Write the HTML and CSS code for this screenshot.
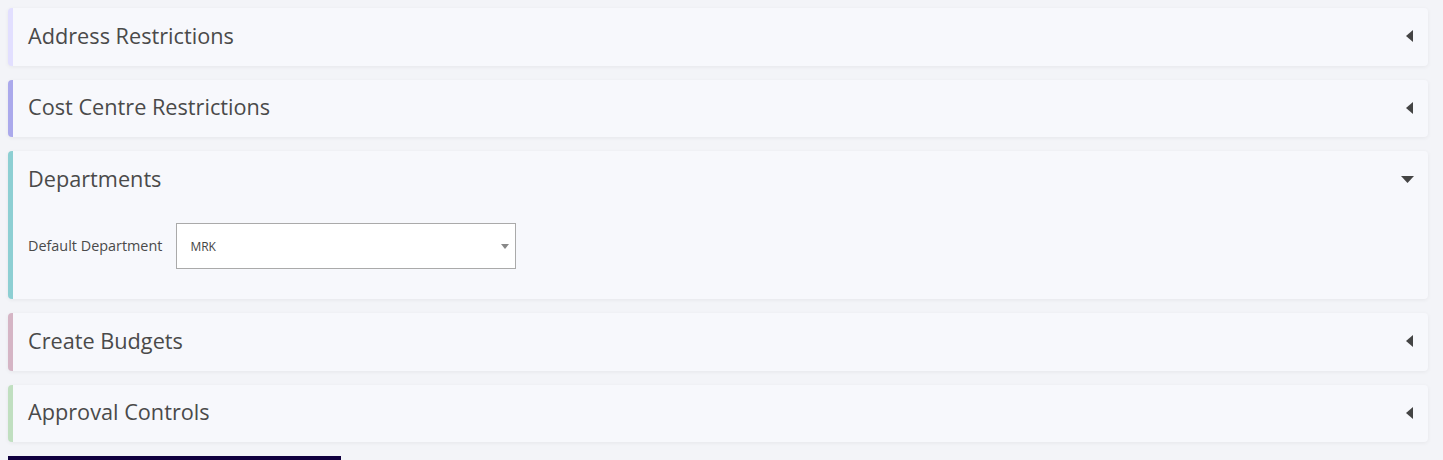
FILE: index.html
```html
<!DOCTYPE html>
<html>
<head>
<meta charset="utf-8">
<link rel="stylesheet" href="styles.css">
</head>
<body>
<div class="stack">
  <section class="panel c1">
    <div class="panel-head"><h2>Address Restrictions</h2>
      <svg class="caret" width="7" height="12" viewBox="0 0 7 12"><path d="M7 0V12L0 6Z" fill="#444"/></svg></div>
  </section>
  <section class="panel c2">
    <div class="panel-head"><h2>Cost Centre Restrictions</h2>
      <svg class="caret" width="7" height="12" viewBox="0 0 7 12"><path d="M7 0V12L0 6Z" fill="#444"/></svg></div>
  </section>
  <section class="panel c3">
    <div class="panel-head"><h2>Departments</h2>
      <svg class="caret down" width="13" height="7" viewBox="0 0 13 7"><path d="M0 0H13L6.5 7Z" fill="#444"/></svg></div>
    <div class="panel-body">
      <label class="field-label">Default Department</label>
      <div class="select">
        <span>MRK</span>
        <svg width="8" height="5" viewBox="0 0 8 5"><path d="M0 0H8L4 5Z" fill="#888"/></svg>
      </div>
    </div>
  </section>
  <section class="panel c4">
    <div class="panel-head"><h2>Create Budgets</h2>
      <svg class="caret" width="7" height="12" viewBox="0 0 7 12"><path d="M7 0V12L0 6Z" fill="#444"/></svg></div>
  </section>
  <section class="panel c5">
    <div class="panel-head"><h2>Approval Controls</h2>
      <svg class="caret" width="7" height="12" viewBox="0 0 7 12"><path d="M7 0V12L0 6Z" fill="#444"/></svg></div>
  </section>
  <div class="footer-bar"></div>
</div>
</body>
</html>
```
FILE: styles.css
```css
html, body {
  margin: 0;
  padding: 0;
  background: #f3f4f8;
  font-family: "Open Sans", "Noto Sans", sans-serif;
  color: #444;
}
.stack {
  padding: 8px 15px 0 8px;
  display: flex;
  flex-direction: column;
  gap: 14px;
}
.panel {
  background: #f7f8fc;
  border-radius: 4px;
  border-left: 5px solid #ddd;
  box-shadow: 0 1px 4px rgba(0,0,0,0.06);
}
.c1 { border-left-color: #e2dfff; }
.c2 { border-left-color: #aba9ec; }
.c3 { border-left-color: #8dcfd3; }
.c4 { border-left-color: #d5b5c5; }
.c5 { border-left-color: #c0dfc0; }
.panel-head {
  display: flex;
  align-items: center;
  justify-content: space-between;
  box-sizing: border-box;
  height: 57.5px;
  padding: 0 15px;
}
.panel-head h2 {
  margin: -3px 0 0 0;
  font-size: 21.7px;
  font-weight: 400;
  line-height: 27px;
  color: #4a4a4a;
}
.caret { margin-top: -1px; }
.caret.down { margin-right: -1px; margin-top: 0; }
.panel-body {
  display: flex;
  align-items: center;
  gap: 14px;
  box-sizing: border-box;
  height: 90.5px;
  padding: 14.5px 15px 30px 15px;
}
.field-label {
  font-size: 14.4px;
  line-height: 20px;
  color: #4a4a4a;
}
.select {
  width: 319px;
  height: 44px;
  border: 1px solid #aaa;
  background: #fff;
  display: flex;
  align-items: center;
  justify-content: space-between;
  padding: 0 6px 0 13px;
  box-sizing: content-box;
  font-size: 12px;
  color: #444;
}
.footer-bar {
  width: 333px;
  height: 10px;
  background: #10003f;
  margin-top: 0;
}
```
